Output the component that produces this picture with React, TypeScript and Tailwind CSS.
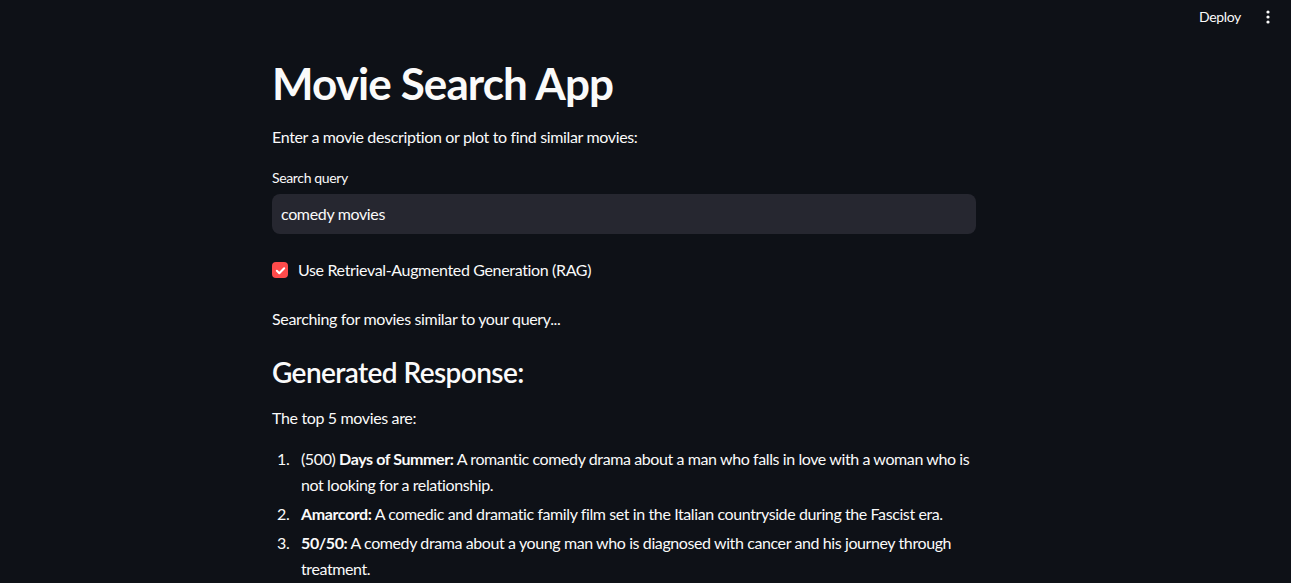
import React from "react";

const movies = [
  {
    titleLead: "(500) ",
    titleBold: "Days of Summer:",
    text: " A romantic comedy drama about a man who falls in love with a woman who is not looking for a relationship.",
  },
  {
    titleLead: "",
    titleBold: "Amarcord:",
    text: " A comedic and dramatic family film set in the Italian countryside during the Fascist era.",
  },
  {
    titleLead: "",
    titleBold: "50/50:",
    text: " A comedy drama about a young man who is diagnosed with cancer and his journey through treatment.",
  },
];

const App: React.FC = () => {
  return (
    <div className="min-h-screen bg-[#0e1117] text-[#fafafa] font-['Lato','Liberation_Sans',sans-serif] tracking-[-0.35px]">
      {/* Header */}
      <header className="flex h-[33px] items-center justify-end pr-[15px]">
        <button className="px-2 text-[14px] text-[#fafafa] mr-[11px]">Deploy</button>
        <svg width="16" height="16" viewBox="0 0 16 16" fill="#fafafa">
          <circle cx="8" cy="3" r="1.6" />
          <circle cx="8" cy="8" r="1.6" />
          <circle cx="8" cy="13" r="1.6" />
        </svg>
      </header>

      {/* Main */}
      <main className="pl-[272px]">
        <div className="w-[704px] pt-[24px] pb-10">
          <h1 className="text-[44px] font-bold leading-[53px] tracking-[-0.9px]">Movie Search App</h1>

          <p className="mt-[15px] text-[16px] leading-[24px]">
            Enter a movie description or plot to find similar movies:
          </p>

          <label className="mt-[19px] block text-[14px] leading-[20px]">Search query</label>
          <div className="mt-[6px] flex h-[40px] items-center rounded-[8px] bg-[#262730] px-[9px] text-[16px]">
            comedy movies
          </div>

          <div className="mt-[24px] flex h-[24px] items-center gap-[10px]">
            <span className="flex h-[16px] w-[16px] items-center justify-center rounded-[4px] bg-[#ff4b4b]">
              <svg width="11" height="11" viewBox="0 0 12 12" fill="none" stroke="#fff" strokeWidth="2.2" strokeLinecap="round" strokeLinejoin="round">
                <path d="M2 6.3l2.7 2.7L10 3.5" />
              </svg>
            </span>
            <span className="text-[16px]">Use Retrieval-Augmented Generation (RAG)</span>
          </div>

          <p className="mt-[25px] text-[16px] leading-[24px]">Searching for movies similar to your query...</p>

          <h2 className="mt-[24px] text-[28px] font-semibold leading-[34px] tracking-[-0.6px]">Generated Response:</h2>

          <p className="mt-[17px] text-[16px] leading-[24px]">The top 5 movies are:</p>

          <ol className="mt-[16px] flex flex-col gap-[3px] text-[16px] leading-[26px] tracking-[-0.4px]">
            {movies.map((m, i) => (
              <li key={i} className="flex">
                <span className="w-[29px] shrink-0 pl-[5px]">{i + 1}.</span>
                <span>
                  {m.titleLead}
                  <strong className="font-bold">{m.titleBold}</strong>
                  {m.text}
                </span>
              </li>
            ))}
          </ol>
        </div>
      </main>
    </div>
  );
};

export default App;
